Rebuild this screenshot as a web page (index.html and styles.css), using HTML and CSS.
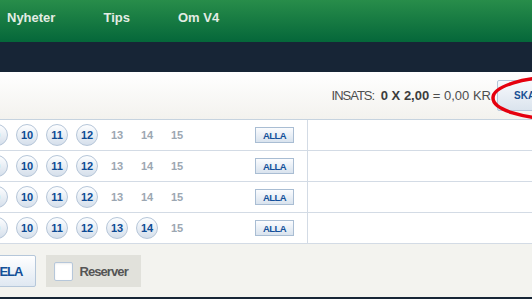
FILE: index.html
```html
<!DOCTYPE html>
<html lang="sv">
<head>
    <meta charset="UTF-8">
    <title>V4 - Kupong</title>
    <meta name="viewport" content="width=device-width, initial-scale=1.0">
    <link rel="stylesheet" href="styles.css">
</head>
<body>

<div class="top-bar">
    <nav class="main-nav">
        <a href="#">Nyheter</a>
        <a href="#">Tips</a>
        <a href="#">Om V4</a>
    </nav>
</div>
<div class="sub-bar"></div>

<div class="coupon">
    <div class="coupon-head">
        <div class="stake"><span class="stake-label">INSATS:</span> <b>0 X 2,00</b> = 0,00 KR</div>
        <button class="play-btn">SKAPA</button>
        <svg class="mark" width="143" height="48" viewBox="0 0 143 48">
            <ellipse cx="71" cy="24" rx="67" ry="21" fill="none" stroke="#e5000e" stroke-width="3.5"/>
        </svg>
    </div>

    <div class="race-row">
        <div class="pick">
            <div class="nums">
                <span class="num on">9</span>
                <span class="num on">10</span>
                <span class="num on">11</span>
                <span class="num on">12</span>
                <span class="num">13</span>
                <span class="num">14</span>
                <span class="num">15</span>
            </div>
            <button class="all-btn">ALLA</button>
        </div>
        <div class="rest"></div>
    </div>

    <div class="race-row">
        <div class="pick">
            <div class="nums">
                <span class="num on">9</span>
                <span class="num on">10</span>
                <span class="num on">11</span>
                <span class="num on">12</span>
                <span class="num">13</span>
                <span class="num">14</span>
                <span class="num">15</span>
            </div>
            <button class="all-btn">ALLA</button>
        </div>
        <div class="rest"></div>
    </div>

    <div class="race-row">
        <div class="pick">
            <div class="nums">
                <span class="num on">9</span>
                <span class="num on">10</span>
                <span class="num on">11</span>
                <span class="num on">12</span>
                <span class="num">13</span>
                <span class="num">14</span>
                <span class="num">15</span>
            </div>
            <button class="all-btn">ALLA</button>
        </div>
        <div class="rest"></div>
    </div>

    <div class="race-row">
        <div class="pick">
            <div class="nums">
                <span class="num on">9</span>
                <span class="num on">10</span>
                <span class="num on">11</span>
                <span class="num on">12</span>
                <span class="num on">13</span>
                <span class="num on">14</span>
                <span class="num">15</span>
            </div>
            <button class="all-btn">ALLA</button>
        </div>
        <div class="rest"></div>
    </div>

    <div class="coupon-foot">
        <button class="share-btn">DELA</button>
        <label class="reserve">
            <span class="check"></span>
            Reserver
        </label>
    </div>
</div>

</body>
</html>
```

FILE: styles.css
```css
* {
    margin: 0;
    padding: 0;
    box-sizing: border-box;
}

body {
    font-family: "Liberation Sans", Arial, sans-serif;
    background: #fff;
    overflow: hidden;
}

.top-bar {
    height: 42px;
    background: linear-gradient(to bottom, #288d4a, #05673a);
}

.main-nav {
    display: flex;
    gap: 48px;
    padding: 10px 0 0 7px;
}

.main-nav a {
    color: #e3ece4;
    font-weight: bold;
    font-size: 13px;
    line-height: 15px;
    text-decoration: none;
}

.sub-bar {
    height: 30px;
    background: #172536;
}

.coupon-head {
    position: relative;
    height: 48px;
    display: flex;
    align-items: center;
    justify-content: flex-end;
    gap: 6px;
    background: linear-gradient(to bottom, #ffffff, #f3f2ee);
    border-bottom: 1px solid #c6d3df;
}

.stake {
    font-size: 13px;
    color: #4e4e4e;
    white-space: nowrap;
}

.stake-label {
    letter-spacing: -1px;
}

.stake b {
    color: #3d3d3d;
    margin-left: 3px;
}

.play-btn {
    width: 80px;
    height: 31px;
    margin-right: -45px;
    padding-left: 16px;
    text-align: left;
    border: 1px solid #b4c6da;
    border-radius: 2px;
    background: linear-gradient(to bottom, #f7f9fc, #dbe4ee);
    color: #174f93;
    font-family: "Liberation Sans", Arial, sans-serif;
    font-weight: bold;
    font-size: 10px;
}

.mark {
    position: absolute;
    left: 489px;
    top: 2px;
}

.race-row {
    display: flex;
    height: 31px;
    border-bottom: 1px solid #d3dbe5;
}

.pick {
    width: 308px;
    display: flex;
    align-items: center;
    border-right: 1px solid #d3dbe5;
    overflow: hidden;
}

.nums {
    display: flex;
    margin-left: -18px;
}

.num {
    width: 22px;
    height: 22px;
    margin: 0 4px;
    display: flex;
    align-items: center;
    justify-content: center;
    font-size: 11px;
    font-weight: bold;
    color: #9ca7b2;
}

.num.on {
    border: 1px solid #b6c6d9;
    border-radius: 50%;
    background: linear-gradient(to bottom, #fdfeff, #d5dfeb);
    color: #0d4b94;
}

.all-btn {
    width: 39px;
    height: 16px;
    margin-left: auto;
    margin-right: 13px;
    border: 1px solid #a9bdd3;
    background: linear-gradient(to bottom, #fbfcfe, #d9e3ee);
    color: #13509a;
    font-family: "Liberation Sans", Arial, sans-serif;
    font-weight: bold;
    font-size: 9.5px;
    letter-spacing: -0.6px;
}

.rest {
    flex: 1;
}

.coupon-foot {
    display: flex;
    gap: 10px;
    padding: 11px 0 10px;
    background: #f3f3ef;
    border-bottom: 3px solid #172536;
}

.share-btn {
    height: 32px;
    margin-left: -23px;
    padding: 0 13px;
    border: 1px solid #b5c7da;
    border-radius: 2px;
    background: linear-gradient(to bottom, #ffffff, #dfe8f2);
    color: #124f98;
    font-family: "Liberation Sans", Arial, sans-serif;
    font-weight: bold;
    font-size: 13px;
    letter-spacing: -1px;
}

.reserve {
    height: 32px;
    display: flex;
    align-items: center;
    gap: 6px;
    padding: 0 13px 0 8px;
    background: #e1e1db;
    color: #555;
    font-weight: bold;
    font-size: 13px;
    letter-spacing: -0.9px;
}

.check {
    width: 19px;
    height: 19px;
    background: #fff;
    border: 1px solid #b6c7da;
    border-radius: 2px;
    box-shadow: inset 0 1px 2px rgba(0, 0, 0, 0.08);
}
```
